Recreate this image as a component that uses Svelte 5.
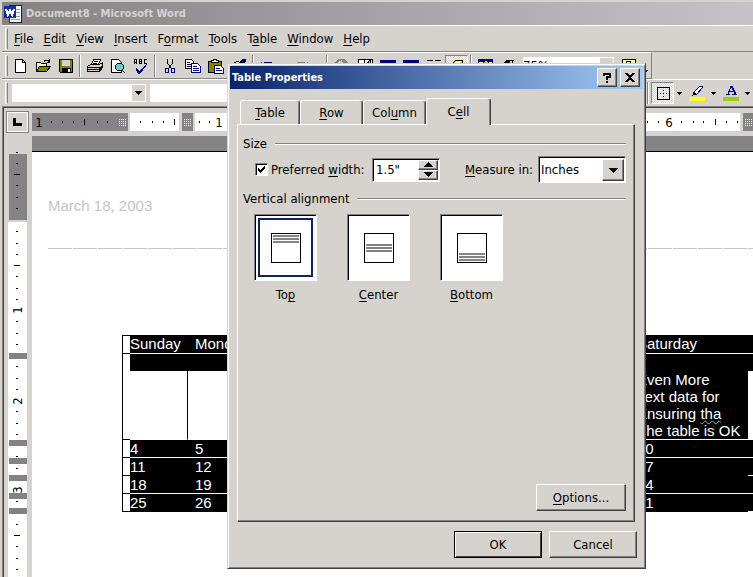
<script lang="ts">
  type Shape = [d: string, fill: string, stroke?: string];

  const navy = "#000082";

  const icons: Record<string, Shape[]> = {
    blank: [["M3.5 1.5h7l3 3v10h-10z", "#fff", "#000"], ["M10.5 1.5v3h3", "none", "#000"]],
    open: [
      ["M1.5 13.5v-9h4l1 1h5v3", "#ffff9c", "#000"],
      ["M1.5 13.5l3-5h11l-4 5z", "#848200", "#000"],
      ["M9 3.5c1-2 3-2 5 0M14.5 1v3h-3", "none", "#000"],
    ],
    save: [
      ["M1.5 1.5h13v13h-12l-1-1z", "#848200", "#000"],
      ["M4 2h8v6h-8z", "#d6d3ce"],
      ["M4 10h9v4h-9z", "#000"],
      ["M10 11h2v3h-2z", "#fff"],
    ],
    print: [
      ["M4.5 6.5l2-5h7l-2 5z", "#fff", "#000"],
      ["M7 3.5h4M6 5.5h4", "none", "#000"],
      ["M.5 8.5l3-2h9l3-2v5l-3 4h-12z", "#d6d3ce", "#000"],
      ["M.5 9.5h12v4M1 11.5h11l3-3", "none", "#000"],
      ["M7 10h3v1h-3z", "#cece00"],
    ],
    preview: [
      ["M1.5 1.5h7l3 3v10h-10z", "#fff", "#000"],
      ["M7.5 5.5h4l2 2v3l-2 2h-4l-2-2v-3z", "#63cfce", "#000"],
      ["M12 12l3 3", "none", "#000"],
    ],
    spell: [
      ["M1 5.5v-3l1-1h1v4M1 4h2M6.500 5.500v-4h2v4h-2M7 3.500h2M14 1.500h-3v4h3", "none", "#000"],
      ["M3 10l3 4 8-8-7 9h-2z", navy, navy],
    ],
    cut: [
      ["M5.500 1v4l4 6M10.500 1v4l-4 6", "none", "#000"],
      ["M3.500 10.500h3v4h-3zM9.500 10.500h3v4h-3z", "none", navy],
    ],
    copy: [
      ["M.5 1.500h6l2 2v7h-8z", "#fff", "#000"],
      ["M6.500 5.500h6l3 3v6h-9z", "#fff", navy],
      ["M2 4.500h3M2 6.500h4M2 8.500h4M8 8.500h4M8 10.500h6M8 12.500h6", "none", navy],
    ],
    paste: [
      ["M.5 3.500h13v11h-13z", "#848200", "#000"],
      ["M3.500 4.500v-2h2v-1h3v1h2v2z", "#ffff9c", "#000"],
      ["M6.500 7.500h6l3 3v5h-9z", "#fff", navy],
      ["M8 10.500h4M8 12.500h6", "none", navy],
    ],
    brush: [
      ["M1 7l5-4 5 3-5 5z", "#ffff9c", "#000"],
      ["M9 4l3-3 3 1-2 4z", navy, "#000"],
    ],
    undo: [["M1.500 4v4h5M2 7l3-3h6l2 3v4", "none", navy]],
    redo: [["M13.500 4v4h-5M13 7l-3-3h-6l-2 3v4", "none", "#848284"]],
    globe: [
      ["M4.500 1.500h6l3 3v6l-3 3h-6l-3-3v-6z", "#848284", "#848284"],
      ["M4 4l4-2 1 3-3 3zM10 5l3 2-3 3z", "#d6d3ce"],
    ],
    borders: [
      ["M1.500 1.500h14v13h-14z", "#fff", "#000"],
      ["M7.500 1v14M8 8.500h7", "none", "#000"],
      ["M10 6l3-4 1 2-3 4z", "#cece00", "#000"],
    ],
    grid: [
      ["M.5 2.500h15v12h-15z", "#fff", "#000"],
      ["M0 2h16v3h-16z", navy],
      ["M1 8.500h14M5.500 5v9M10.500 5v9", "none", "#848284"],
    ],
    columns: [["M1 2.500h6M9 2.500h6M1 5.500h6M9 5.500h6M1 8.500h6M9 8.500h6", "none", "#000"]],
    draw: [
      ["M3.500 5.500l3-3h7v8l-3 3h-7z", "#cece00", "#000"],
      ["M5 5h5l2-2h-5z", "#ffff9c"],
    ],
    map: [
      ["M.5 1.500h14v12h-14z", "#fff", navy],
      ["M0 1h15v3h-15z", navy],
      ["M4 6l4-4 4 4z", "#cece00", "#000"],
    ],
    pilcrow: [["M7 2h6M8.500 2v12M11.500 2v12", "none", "#000"], ["M8 2h-3l-2 2v2l2 2h3z", "#000"]],
    help: [
      ["M1.500 1.500h13v9h-5l-3 3v-3h-5z", "#ffff9c", "#000"],
      ["M5.500 5v-1.500h4v3h-2v2", "none", navy],
    ],
    outline: [
      ["M2.500 2.500h12v12h-12z", "none", "#000"],
      ["M8 5h1v1h-1zM8 8h1v1h-1zM8 11h1v1h-1zM5 8h1v1h-1zM11 8h1v1h-1z", "#000"],
    ],
    marker: [
      ["M5 7l6-6 3 1-6 7-4 1z", "#fff", navy],
      ["M3 9l2-2 3 2-3 1z", "#000"],
      ["M0 12h16v4h-16z", "#ff0"],
    ],
    color: [
      ["M0 12h16v4h-16z", "#9ccf00"],
      ["M3 9.500h4M9 9.500h5M5 9l3-8 4 8M6 6.500h5M8 1l4 8M9 1l4 8", "none", navy],
    ],
  };

  const menus = [
    ["", "F", "ile"], ["", "E", "dit"], ["", "V", "iew"], ["", "I", "nsert"], ["F", "o", "rmat"],
    ["", "T", "ools"], ["T", "a", "ble"], ["", "W", "indow"], ["", "H", "elp"],
  ];

  const tools = [
    "blank", "open", "save", "|", "print", "preview", "spell", "|", "cut", "copy", "paste", "brush", "|",
    "undo", "v", "redo", "v", "|", "globe", "borders", "grid", "grid", "columns", "draw", "|", "map", "pilcrow",
  ];

  const tabs = [
    { id: "table", label: ["", "T", "able"], width: 60 },
    { id: "row", label: ["", "R", "ow"], width: 63 },
    { id: "column", label: ["Col", "u", "mn"], width: 63 },
    { id: "cell", label: ["C", "e", "ll"], width: 65 },
  ];

  const alignments = [
    { id: "top", label: ["To", "p", ""], y: 3 },
    { id: "center", label: ["", "C", "enter"], y: 12 },
    { id: "bottom", label: ["", "B", "ottom"], y: 21 },
  ];

  const rows = [
    ["4", "5", "", "", "", "", "10"],
    ["11", "12", "", "", "", "", "17"],
    ["18", "19", "", "", "", "", "24"],
    ["25", "26", "", "", "", "", "31"],
  ];
  const days = ["Sunday", "Monday", "", "", "", "", "Saturday"];

  const hDots = [19, 30, 41, 65, 75, 108, 120, 131, 167, 177, 615, 626, 649, 661, 671, 694, 705];
  const hTicks = [52, 142, 683];
  const vDots = [
    16, 27, 49, 61, 72, 95, 107, 118, 140, 152, 163, 185, 197, 208, 230, 242, 253, 275, 287, 298,
    320, 332, 365, 388, 410, 422, 433,
  ];
  const vTicks = [38, 129, 399];
  const vStops = [217, 304, 322, 339, 357, 372];

  let activeTab = $state("cell");
  let align = $state("top");
  let preferred = $state(true);
  let width = $state(1.5);
</script>

{#snippet mnemonic(parts: string[])}{parts[0]}<u>{parts[1]}</u>{parts[2]}{/snippet}

{#snippet icon(name: string)}
  <svg width="16" height="16" viewBox="0 0 16 16" aria-hidden="true">
    {#each icons[name] as [d, fill, stroke]}
      <path {d} {fill} stroke={stroke ?? "none"} />
    {/each}
  </svg>
{/snippet}

{#snippet arrow(size = 5)}
  <svg class="arrow" width={size} height={(size + 1) / 2} viewBox="0 0 10 5" aria-hidden="true"><path d="M0 0h10L5 5z" /></svg>
{/snippet}

<div class="window">
  <header class="caption">
    <svg width="20" height="20" viewBox="0 0 20 20" aria-hidden="true">
      <path d="M6.500 1.500h12v17h-12z" fill="#fff" stroke="#222" />
      <path d="M13 5.500h4M13 8.500h4M8 12.500h9M8 15.500h9" stroke="#8c9ac6" />
      <path d="M1 2h12v12h-12z" fill="#1030a5" />
      <path d="M3 5l2 6 2-5 2 5 2-6" fill="none" stroke="#fff" stroke-width="2" />
    </svg>
    <h1>Document8 - Microsoft Word</h1>
  </header>

  <nav class="bar menu">
    <span class="grip"></span>
    {#each menus as item}
      <button type="button">{@render mnemonic(item)}</button>
    {/each}
  </nav>

  <div class="bar tools">
    <span class="grip"></span>
    {#each tools as tool}
      {#if tool === "|"}
        <span class="sep"></span>
      {:else if tool === "v"}
        <button type="button" class="drop" aria-label="More">{@render arrow()}</button>
      {:else}
        <button type="button" class="tool" class:pressed={tool === "draw"} aria-label={tool}>{@render icon(tool)}</button>
      {/if}
    {/each}
    <div class="combo zoom">
      <select aria-label="Zoom"><option>75%</option></select>
      <span class="combo-button">{@render arrow(7)}</span>
    </div>
    <button type="button" class="tool" aria-label="Help">{@render icon("help")}</button>
    <button type="button" class="drop overflow" aria-label="More buttons">{@render arrow()}</button>
  </div>

  <div class="bar format">
    <span class="grip"></span>
    <div class="combo style">
      <select aria-label="Style"><option></option></select>
      <span class="combo-button">{@render arrow(7)}</span>
    </div>
    <div class="combo font">
      <select aria-label="Font"><option></option></select>
    </div>
    <span class="sep"></span>
    {#each ["outline", "marker", "color"] as tool}
      <button type="button" class="tool" class:pressed={tool === "outline"} aria-label={tool}>{@render icon(tool)}</button>
      <button type="button" class="drop" aria-label="More">{@render arrow()}</button>
    {/each}
  </div>

  <main class="workspace">
    <button type="button" class="tab-stop" aria-label="Left tab">
      <svg width="9" height="8" viewBox="0 0 9 8"><path d="M1 0v6.500h8" fill="none" stroke="#000" stroke-width="3" /></svg>
    </button>

    <svg class="h-ruler" width="100%" height="18" aria-hidden="true">
      <rect width="96" height="18" fill="#848284" />
      <rect x="98" width="49" height="18" fill="#fff" />
      <rect x="150" width="11" height="18" fill="#848284" />
      <rect x="163" width="545" height="18" fill="#fff" />
      <rect x="711" width="100%" height="18" fill="#848284" />
      {#each [87, 152, 713] as x}
        {#each [6, 8, 10, 12] as y}
          <path d="M{x} {y}.500h8" stroke="#fff" stroke-dasharray="1 1" />
        {/each}
      {/each}
      {#each hDots as x}<rect {x} y="8" width="1" height="2" />{/each}
      {#each hTicks as x}<rect {x} y="6" width="1" height="6" />{/each}
      <text x="7" y="14" text-anchor="middle">1</text>
      <text x="187" y="14" text-anchor="middle">1</text>
      <text x="637" y="14" text-anchor="middle">6</text>
    </svg>

    <svg class="v-ruler" width="20" height="441" aria-hidden="true">
      <rect x="1" y="18" width="18" height="66" fill="#848284" />
      <rect y="86" width="19" height="355" fill="#fff" />
      {#each vDots as y}<rect x="8" {y} width="2" height="1" />{/each}
      {#each vTicks as y}<rect x="6" {y} width="6" height="1" />{/each}
      <text transform="translate(14 174) rotate(-90)" text-anchor="middle">1</text>
      <text transform="translate(14 265) rotate(-90)" text-anchor="middle">2</text>
      <text transform="translate(14 354) rotate(-90)" text-anchor="middle">3</text>
      {#each vStops as y}<rect x="1" {y} width="18" height="6" fill="#848284" />{/each}
    </svg>

    <article class="page">
      <p class="date">March 18, 2003</p>
      <div class="dashes"></div>
      <table>
        <colgroup>
          <col class="c-mark" /><col class="c-sun" /><col span="5" /><col class="c-sat" /><col class="c-end" />
        </colgroup>
        <tbody>
          <tr>
            <td class="mark"></td>
            {#each days as day}<td>{day}</td>{/each}
            <td class="end"></td>
          </tr>
          <tr class="tall">
            <td class="mark"></td>
            {#each days.slice(1) as _}<td></td>{/each}
            <td class="full"><br />Even More<br />Text data for<br />Ensuring <span class="typo">tha</span><br />The table is OK</td>
            <td class="end"></td>
          </tr>
          {#each rows as row, i}
            <tr class:joined={i === 1}>
              <td class="mark"></td>
              {#each row as cell}<td>{cell}</td>{/each}
              <td class="end"></td>
            </tr>
          {/each}
        </tbody>
      </table>
    </article>
  </main>

  <div class="dialog" role="dialog" aria-labelledby="dialog-title">
    <header class="dialog-caption">
      <h2 id="dialog-title">Table Properties</h2>
      <button type="button" aria-label="Help">
        <svg width="10" height="12" viewBox="0 0 10 12"><path d="M2 4v-2h6v3h-3v3" fill="none" stroke="#000" stroke-width="2" /><path d="M4 9h2v2h-2z" /></svg>
      </button>
      <button type="button" aria-label="Close">
        <svg width="10" height="9" viewBox="0 0 10 9"><path d="M1 0l8 9M9 0l-8 9" stroke="#000" stroke-width="2" /></svg>
      </button>
    </header>

    <div class="tabs" role="tablist">
      {#each tabs as tab}
        <button
          type="button"
          role="tab"
          aria-selected={activeTab === tab.id}
          class:active={activeTab === tab.id}
          style:width="{tab.width}px"
          onclick={() => (activeTab = tab.id)}>{@render mnemonic(tab.label)}</button>
      {/each}
    </div>

    <section class="panel">
      <h3>Size</h3>
      <div class="size">
        <label class="check">
          <input type="checkbox" bind:checked={preferred} />
          <svg width="7" height="7" viewBox="0 0 7 7" aria-hidden="true"><path d="M0 2l2 2 5-4v3l-5 4-2-2z" /></svg>
          <span>Preferred <u>w</u>idth:</span>
        </label>
        <div class="spinner">
          <input type="text" aria-label="Preferred width" value={`${width}"`} />
          <button type="button" class="up" aria-label="Increase" onclick={() => (width += 0.1)}>{@render arrow(9)}</button>
          <button type="button" aria-label="Decrease" onclick={() => (width -= 0.1)}>{@render arrow(9)}</button>
        </div>
        <label class="measure" for="measure"><u>M</u>easure in:</label>
        <div class="combo sunken">
          <select id="measure"><option>Inches</option><option>Percent</option></select>
          <span class="combo-button raised">{@render arrow(9)}</span>
        </div>
      </div>

      <h3>Vertical alignment</h3>
      <div class="choices">
        {#each alignments as item}
          <button type="button" class="choice" aria-pressed={align === item.id} onclick={() => (align = item.id)}>
            <span class="tile" class:chosen={align === item.id}>
              <svg width="30" height="30" viewBox="0 0 30 30" aria-hidden="true">
                <path d="M.5.5h29v29h-29z" fill="#fff" stroke="#000" />
                {#each [0, 3, 6] as dy}
                  <rect x="2" y={item.y + dy - 1} width="26" height="2" fill="#848284" />
                {/each}
              </svg>
            </span>
            <span>{@render mnemonic(item.label)}</span>
          </button>
        {/each}
      </div>

      <button type="button" class="push options"><u>O</u>ptions...</button>
    </section>

    <footer>
      <button type="button" class="push default">OK</button>
      <button type="button" class="push">Cancel</button>
    </footer>
  </div>
</div>

<style>
  :global(body) {
    background: #d6d3ce;
  }

  .window {
    --face: #d6d3ce;
    --shadow: #848284;
    --dark: #424142;
    position: relative;
    display: flex;
    flex-direction: column;
    min-height: 100vh;
    overflow: hidden;
    box-sizing: border-box;
    padding-top: 2px;
    background: var(--face);
    color: #000;
    font: 13px/16px "DejaVu Sans Condensed", "DejaVu Sans", sans-serif;
  }

  svg {
    display: block;
    flex: none;
    shape-rendering: crispEdges;
  }

  button,
  input,
  select {
    box-sizing: border-box;
    margin: 0;
    border: 0;
    padding: 0;
    background: none;
    color: inherit;
    font: inherit;
    outline: 0;
  }

  h1,
  h2,
  h3,
  p {
    margin: 0;
    font: inherit;
  }

  u {
    text-decoration-skip-ink: none;
    text-underline-offset: 2px;
  }

  .caption {
    display: flex;
    align-items: center;
    gap: 3px;
    height: 23px;
    margin-left: 2px;
    padding-left: 1px;
    background: linear-gradient(90deg, #848284, #c6c3c6);
  }
  .caption h1 {
    color: var(--face);
    font-size: 11px;
    font-weight: bold;
  }

  .bar {
    display: flex;
    align-items: center;
    box-sizing: border-box;
    height: 27px;
    margin-left: 2px;
    border-top: 1px solid #fff;
    border-bottom: 1px solid var(--shadow);
    padding-left: 3px;
  }
  .grip {
    flex: none;
    width: 1px;
    height: 20px;
    border: 1px solid #fff;
    border-right-color: var(--shadow);
  }
  .sep {
    flex: none;
    width: 1px;
    height: 22px;
    margin: 0 2px;
    border-right: 1px solid #fff;
    background: var(--shadow);
  }
  .menu {
    gap: 10px;
  }
  .menu .grip {
    margin-right: -4px;
  }

  .tools {
    align-self: flex-start;
    border-right: 1px solid var(--shadow);
  }
  .tool {
    display: grid;
    flex: none;
    place-items: center;
    width: 23px;
    height: 22px;
  }
  .pressed {
    border: 1px solid var(--shadow);
    border-right-color: #fff;
    border-bottom-color: #fff;
    background: repeating-conic-gradient(#fff 0 25%, var(--face) 0 50%) 0 0 / 2px 2px;
  }
  .drop {
    display: grid;
    flex: none;
    place-items: center;
    width: 11px;
    height: 22px;
  }
  .overflow {
    align-items: end;
    padding-bottom: 4px;
  }

  .format {
    border-bottom: 0;
  }
  .combo {
    display: flex;
    box-sizing: border-box;
    background: #fff;
  }
  .combo select {
    flex: 1;
    min-width: 0;
    appearance: none;
  }
  .combo-button {
    display: grid;
    flex: none;
    place-items: center;
    width: 13px;
    border: 1px solid #fff;
    background: var(--face);
    pointer-events: none;
  }
  .zoom {
    width: 91px;
    height: 18px;
    margin: 0 3px;
  }
  .style {
    width: 134px;
    height: 18px;
    margin: 0 4px;
  }
  .font {
    flex: 1;
    height: 18px;
  }

  .workspace {
    display: grid;
    flex: 1;
    grid-template: 28px 1fr / 28px 1fr;
    margin-left: 2px;
    border-top: 1px solid var(--shadow);
    border-left: 1px solid var(--shadow);
    padding: 1px 0 0 1px;
    box-shadow: inset 1px 1px var(--dark);
  }
  .tab-stop {
    display: grid;
    place-items: center;
    align-self: center;
    width: 21px;
    height: 20px;
    margin-left: 3px;
    border: 1px solid #fff;
    outline: 1px solid var(--shadow);
  }
  .h-ruler {
    align-self: center;
  }
  .v-ruler {
    margin-left: 4px;
  }

  .page {
    border-top: 15px solid var(--shadow);
    background: #fff;
    font: 15px/17px "Liberation Sans", Arial, sans-serif;
  }
  .date {
    border-top: 1px solid #000;
    padding: 45px 16px 34px;
    color: #c6c3c6;
  }
  .dashes {
    height: 1px;
    margin-left: 16px;
    background: repeating-linear-gradient(90deg, #c6c3c6 0 24px, #fff 24px 25px);
  }

  table {
    width: calc(100% - 90px);
    margin: 86px 0 0 90px;
    border-collapse: separate;
    border-spacing: 0;
    table-layout: fixed;
    color: #fff;
  }
  .c-mark {
    width: 8px;
  }
  .c-sun {
    width: 58px;
  }
  .c-sat {
    width: 118px;
  }
  .c-end {
    width: 5px;
  }
  td {
    height: 17px;
    overflow: hidden;
    border-bottom: 1px solid #fff;
    padding: 0 0 0 7px;
    background: #000;
    vertical-align: top;
    white-space: nowrap;
  }
  td:nth-child(2) {
    padding-left: 0;
  }
  .mark {
    border-bottom-color: #000;
    border-left: 1px solid #000;
    padding: 0;
    background: #fff;
  }
  tr:first-child .mark {
    border-top: 1px solid #000;
  }
  .end {
    padding: 0;
  }
  .joined td:not(.mark, .end) {
    border-bottom-color: #000;
  }
  tr:last-child td:not(.end) {
    border-bottom-color: #000;
  }
  .tall td:not(.mark, .full) {
    border-right: 1px solid #000;
    background: linear-gradient(#000 17px, #fff 17px);
  }
  .tall td.end {
    border-right: 0;
  }
  .typo {
    text-decoration: underline wavy #63cfce 1px;
  }

  .dialog {
    position: absolute;
    top: 63px;
    left: 227px;
    display: flex;
    flex-direction: column;
    box-sizing: border-box;
    width: 419px;
    border: 1px solid var(--face);
    border-right-color: var(--dark);
    border-bottom-color: var(--dark);
    padding: 2px;
    background: var(--face);
    box-shadow: inset 1px 1px #fff, inset -1px -1px var(--shadow);
  }
  .dialog-caption {
    display: flex;
    align-items: center;
    gap: 3px;
    height: 23px;
    padding: 0 3px 0 2px;
    background: linear-gradient(90deg, #08246b, #a5cbf7);
  }
  .dialog-caption h2 {
    flex: 1;
    color: #fff;
    font-size: 11px;
    font-weight: bold;
  }
  .dialog-caption button {
    display: grid;
    place-items: center;
    width: 20px;
    height: 19px;
  }

  .dialog-caption button,
  .push,
  .raised,
  .spinner button {
    border: 1px solid #fff;
    border-right-color: var(--dark);
    border-bottom-color: var(--dark);
    background: var(--face);
    box-shadow: inset -1px -1px var(--shadow);
  }

  .tabs {
    display: flex;
    align-items: flex-end;
    height: 27px;
    padding: 8px 0 0 10px;
  }
  .tabs button {
    height: 24px;
    border: 1px solid #fff;
    border-right-color: var(--dark);
    border-bottom: 0;
    border-radius: 3px 3px 0 0;
    box-shadow: inset -1px 0 var(--shadow);
  }
  .tabs .active {
    position: relative;
    height: 27px;
    margin-bottom: -1px;
    background: var(--face);
  }

  .panel {
    display: flex;
    flex-direction: column;
    box-sizing: border-box;
    height: 398px;
    margin: 0 8px 0 7px;
    border: 1px solid #fff;
    border-right-color: var(--dark);
    border-bottom-color: var(--dark);
    padding: 11px 8px 10px 5px;
    box-shadow: inset -1px -1px var(--shadow);
  }
  h3 {
    display: flex;
    align-items: center;
    gap: 8px;
  }
  h3::after {
    content: "";
    flex: 1;
    height: 1px;
    border-bottom: 1px solid #fff;
    background: var(--shadow);
  }

  .size {
    display: flex;
    align-items: center;
    height: 27px;
    margin: 4px 0 8px;
    padding-left: 12px;
  }
  .check {
    display: grid;
    grid-template-columns: 13px 1fr;
    align-items: center;
    column-gap: 3px;
    width: 117px;
    white-space: nowrap;
  }
  .check input {
    grid-area: 1 / 1;
    width: 13px;
    height: 13px;
    appearance: none;
  }
  .check svg {
    grid-area: 1 / 1;
    justify-self: center;
    visibility: hidden;
    pointer-events: none;
  }
  .check input:checked + svg {
    visibility: visible;
  }
  .check input,
  .spinner,
  .sunken,
  .tile {
    border: 1px solid var(--shadow);
    border-right-color: #fff;
    border-bottom-color: #fff;
    background: #fff;
    box-shadow: inset 1px 1px #000;
  }
  .spinner {
    display: grid;
    grid-template: 1fr 1fr / 1fr 20px;
    box-sizing: border-box;
    width: 68px;
    height: 24px;
    padding: 1px;
  }
  .spinner input {
    grid-row: 1 / 3;
    width: 100%;
    min-width: 0;
    padding-left: 2px;
  }
  .spinner button {
    display: grid;
    place-items: center;
  }
  .up .arrow {
    transform: rotate(180deg);
  }
  .measure {
    margin: 0 5px 0 auto;
  }
  .sunken {
    width: 88px;
    height: 27px;
    padding: 2px 1px 1px 2px;
  }
  .raised {
    width: 20px;
  }

  .choices {
    display: flex;
    gap: 30px;
    margin: 7px 0 0 11px;
  }
  .choice {
    display: flex;
    flex-direction: column;
    align-items: center;
    gap: 6px;
    width: 63px;
  }
  .tile {
    display: grid;
    place-items: center;
    box-sizing: border-box;
    width: 63px;
    height: 67px;
  }
  .chosen {
    outline: 2px solid #08246b;
    outline-offset: -6px;
  }

  .push {
    width: 88px;
    height: 27px;
  }
  .options {
    align-self: flex-end;
    width: 90px;
    margin-top: auto;
  }
  footer {
    display: flex;
    justify-content: flex-end;
    gap: 7px;
    padding: 9px 6px 8px;
  }
  .default {
    outline: 1px solid #000;
    outline-offset: -1px;
    border-color: #000;
    box-shadow: inset 1px 1px #fff, inset -1px -1px var(--dark);
  }
</style>
